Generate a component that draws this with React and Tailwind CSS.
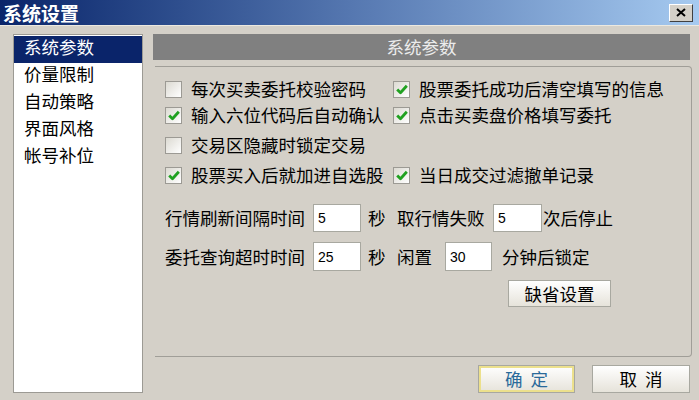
import React from 'react';

const cjk = { fontFamily: '"Noto Sans CJK SC", "Noto Sans", sans-serif' };

const Check = ({ checked }) => (
  <span className="w-[17px] h-[17px] shrink-0 border border-[#9c9a94] bg-gradient-to-br from-[#dcdad2] to-white flex items-center justify-center">
    {checked && (
      <svg width="12" height="11" viewBox="0 0 12 11">
        <path d="M1.2 5.5 L4.5 8.8 L10.8 1.8" fill="none" stroke="#21a121" strokeWidth="2.8" strokeLinejoin="round" />
      </svg>
    )}
  </span>
);

const Option = ({ checked, label }) => (
  <div className="flex items-center gap-[9px]">
    <Check checked={checked} />
    <span className="whitespace-nowrap">{label}</span>
  </div>
);

const NumBox = ({ value, w }) => (
  <div className={`${w} h-full bg-white border border-[#a8a8a0] flex items-center pl-[4px] text-[14px] text-black`} style={{ fontFamily: '"Liberation Sans", Arial, sans-serif' }}>
    {value}
  </div>
);

const menu = ['系统参数', '价量限制', '自动策略', '界面风格', '帐号补位'];

const App = () => {
  return (
    <div className="w-[699px] h-[400px] bg-[#d4d0c8] flex flex-col overflow-hidden text-black text-[17.5px] leading-none" style={cjk}>
      {/* title bar */}
      <div className="h-[25px] shrink-0 bg-gradient-to-r from-[#0a246a] via-[#5577b0] to-[#a6caf0] flex items-center justify-between pl-[3px] pr-[6px]">
        <span className="text-white font-bold text-[19px] leading-[23px]">系统设置</span>
        <div className="w-[24px] h-[18px] bg-[#d4d0c8] border border-t-white border-l-white border-r-[#404040] border-b-[#404040] flex items-center justify-center">
          <svg width="10" height="9" viewBox="0 0 10 9">
            <path d="M1 1 L9 8 M9 1 L1 8" stroke="#000" strokeWidth="2" />
          </svg>
        </div>
      </div>
      <div className="h-px bg-[#ece9e0]" />

      <div className="flex flex-1 pt-[8px]">
        {/* left list */}
        <div className="ml-[13px] w-[130px] h-[359px] bg-white border border-[#9c9a94] pt-[1px]">
          {menu.map((m, i) => (
            <div
              key={m}
              className={`h-[27px] flex items-center pl-[10px] pb-[6px] ${i === 0 ? 'bg-[#0a246a] text-white' : 'text-black'}`}
            >
              {m}
            </div>
          ))}
        </div>

        {/* right side */}
        <div className="ml-[10px] w-[539px] flex flex-col">
          <div className="h-[26px] bg-[#808080] flex items-center justify-center text-[#ececec] mr-[2px]">系统参数</div>

          <div className="mt-[6px] ml-[2px] h-[291px] border-t border-r border-b border-[#a09e98] rounded-tr-[4px] rounded-br-[4px] flex flex-col pl-[10px] pt-[13px]">
            <div className="grid grid-cols-[228px_1fr] h-[18px]">
              <Option label="每次买卖委托校验密码" />
              <Option checked label="股票委托成功后清空填写的信息" />
            </div>
            <div className="grid grid-cols-[228px_1fr] h-[18px] mt-[8px]">
              <Option checked label="输入六位代码后自动确认" />
              <Option checked label="点击买卖盘价格填写委托" />
            </div>
            <div className="grid grid-cols-[228px_1fr] h-[18px] mt-[12px]">
              <Option label="交易区隐藏时锁定交易" />
            </div>
            <div className="grid grid-cols-[228px_1fr] h-[18px] mt-[12px]">
              <Option checked label="股票买入后就加进自选股" />
              <Option checked label="当日成交过滤撤单记录" />
            </div>

            <div className="flex items-center h-[28px] mt-[20px] whitespace-nowrap">
              <span className="w-[148px]">行情刷新间隔时间</span>
              <NumBox value="5" w="w-[48px]" />
              <span className="ml-[7px] w-[29px]">秒</span>
              <span className="w-[96px]">取行情失败</span>
              <NumBox value="5" w="w-[49px]" />
              <span className="ml-[1px]">次后停止</span>
            </div>
            <div className="flex items-center h-[29px] mt-[10px] whitespace-nowrap">
              <span className="w-[148px]">委托查询超时时间</span>
              <NumBox value="25" w="w-[48px]" />
              <span className="ml-[7px] w-[29px]">秒</span>
              <span className="w-[48px]">闲置</span>
              <NumBox value="30" w="w-[47px]" />
              <span className="ml-[10px]">分钟后锁定</span>
            </div>
            <div className="mt-[9px] ml-[343px]">
              <button className="w-[103px] h-[27px] border border-[#a8a8a0] bg-gradient-to-b from-white to-[#e6e3da] flex items-center justify-center">
                缺省设置
              </button>
            </div>
          </div>

          <div className="flex justify-end gap-[17px] mt-[8px] mr-[2px]">
            <button className="w-[97px] h-[28px] border border-[#a8a8a0] bg-gradient-to-b from-white to-[#e6e3da] shadow-[inset_0_0_0_2px_#ece08c] flex items-center justify-center text-[#2a6a9a] tracking-[8px] pl-[8px]">
              确定
            </button>
            <button className="w-[98px] h-[28px] border border-[#a8a8a0] bg-gradient-to-b from-white to-[#e6e3da] flex items-center justify-center tracking-[8px] pl-[8px]">
              取消
            </button>
          </div>
        </div>
      </div>
    </div>
  );
};

export default App;
